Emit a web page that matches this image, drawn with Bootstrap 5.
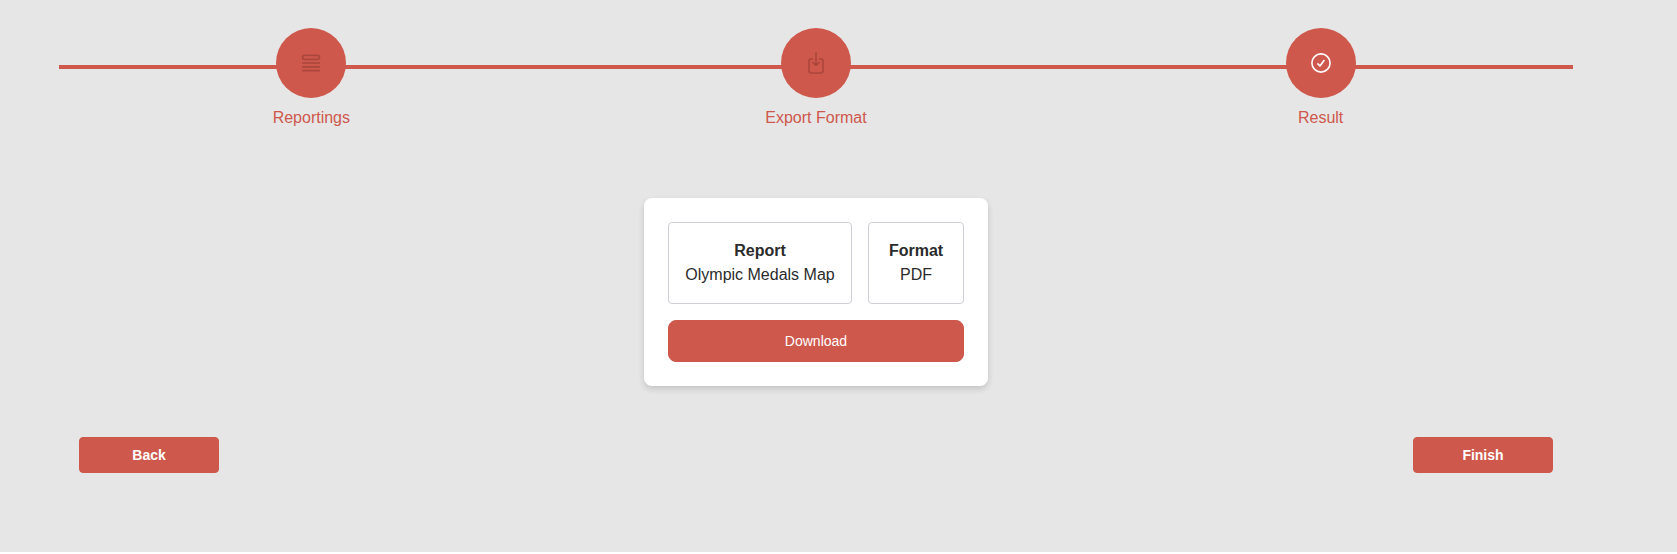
<!DOCTYPE html>
<html lang="en">
<head>
<meta charset="utf-8">
<meta name="viewport" content="width=device-width, initial-scale=1">
<title>Export report</title>
<link href="https://cdn.jsdelivr.net/npm/bootstrap@5.3.0/dist/css/bootstrap.min.css" rel="stylesheet">
<style>
:root { --brand: #ce584c; }
body { background: #fff; color: #2b2b2b; font-family: "Liberation Sans", Arial, sans-serif; font-size: 16px; line-height: 24px; }
.page-area { background: #e6e6e6; height: 552px; }
.wizard { width: 1514px; margin-left: 59px; padding-top: 28px; }
.steps { background: linear-gradient(var(--brand), var(--brand)) 0 37px / 100% 4px no-repeat; }
.step-label { color: var(--brand); margin-top: 8px; }
.step-dot { width: 70px; height: 70px; background: var(--brand); color: #ab463c; }
.step-dot.current { color: #fff; }
.result-card { padding: 24px; margin-top: 68px; border-radius: 8px; box-shadow: 0 3px 6px rgba(0,0,0,.15); }
.info-box { border: 1px solid #d0d0d7; border-radius: 4px; padding: 16px 0; height: 82px; }
.info-format { width: 96px; }
.info-report { width: 184px; white-space: nowrap; }
.btn-brand { --bs-btn-color: #fff; --bs-btn-bg: var(--brand); --bs-btn-border-color: var(--brand); --bs-btn-hover-color: #fff; --bs-btn-hover-bg: #b94d42; --bs-btn-hover-border-color: #b94d42; font-size: 14px; line-height: 20px; }
.btn-download { height: 42px; border-radius: 8px; }
.nav-actions { margin: 51px 20px 0; }
.btn-nav { width: 140px; height: 36px; border-radius: 4px; padding-top: 7px; padding-bottom: 7px; }
</style>
</head>
<body>
<div class="page-area">
<main class="wizard">
  <ol class="steps row g-0 list-unstyled mb-0 text-center">
    <li class="col-4 d-flex flex-column align-items-center">
      <div class="step-dot rounded-circle d-flex align-items-center justify-content-center">
        <svg width="20" height="20" viewBox="0 0 20 20" fill="none" stroke="currentColor" stroke-width="1.7" stroke-linecap="round"><rect x="1.600" y="2.400" width="16.800" height="4" rx="1.900"/><path d="M1.800 10h16.400M1.800 13.800h16.400M1.800 17.700h16.400"/></svg>
      </div>
      <div class="step-label">Reportings</div>
    </li>
    <li class="col-4 d-flex flex-column align-items-center">
      <div class="step-dot rounded-circle d-flex align-items-center justify-content-center">
        <svg width="20" height="22" viewBox="0 0 20 22" fill="none" stroke="currentColor" stroke-width="1.6" stroke-linecap="round" stroke-linejoin="round"><path d="M6.500 7H5a2 2 0 0 0-2 2v10a2 2 0 0 0 2 2h10a2 2 0 0 0 2-2V9a2 2 0 0 0-2-2h-1.500M10 1v12.500M7 10.500l3 3 3-3"/></svg>
      </div>
      <div class="step-label">Export Format</div>
    </li>
    <li class="col-4 d-flex flex-column align-items-center">
      <div class="step-dot current rounded-circle d-flex align-items-center justify-content-center">
        <svg width="20" height="20" viewBox="0 0 20 20" fill="none" stroke="currentColor" stroke-width="1.600" stroke-linecap="round" stroke-linejoin="round"><circle cx="10" cy="10" r="9.100"/><path d="m6.900 10.900 2.100 2.100 4-5.500"/></svg>
      </div>
      <div class="step-label">Result</div>
    </li>
  </ol>
  <section class="d-flex justify-content-center">
    <div class="result-card bg-white d-flex flex-column gap-3">
      <div class="d-flex gap-3 text-center">
        <div class="info-box info-report"><div class="fw-bold">Report</div><div>Olympic Medals Map</div></div>
        <div class="info-box info-format"><div class="fw-bold">Format</div><div>PDF</div></div>
      </div>
      <button class="btn btn-brand btn-download" type="button">Download</button>
    </div>
  </section>
  <div class="d-flex justify-content-between nav-actions">
    <button class="btn btn-brand btn-nav fw-bold" type="button">Back</button>
    <button class="btn btn-brand btn-nav fw-bold" type="button">Finish</button>
  </div>
</main>
</div>
<script src="https://cdn.jsdelivr.net/npm/bootstrap@5.3.0/dist/js/bootstrap.bundle.min.js"></script>
</body>
</html>
